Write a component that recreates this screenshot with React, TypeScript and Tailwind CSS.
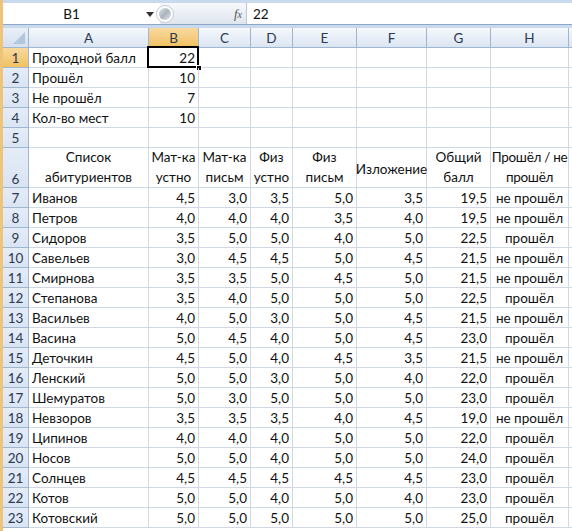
import React from "react";

const cols = ["A", "B", "C", "D", "E", "F", "G", "H"];
const widths = [120, 50, 52, 42, 64, 70, 64, 78];

const data: [string, string, string, string, string, string, string, string][] = [
  ["Иванов", "4,5", "3,0", "3,5", "5,0", "3,5", "19,5", "не прошёл"],
  ["Петров", "4,0", "4,0", "4,0", "3,5", "4,0", "19,5", "не прошёл"],
  ["Сидоров", "3,5", "5,0", "5,0", "4,0", "5,0", "22,5", "прошёл"],
  ["Савельев", "3,0", "4,5", "4,5", "5,0", "4,5", "21,5", "не прошёл"],
  ["Смирнова", "3,5", "3,5", "5,0", "4,5", "5,0", "21,5", "не прошёл"],
  ["Степанова", "3,5", "4,0", "5,0", "5,0", "5,0", "22,5", "прошёл"],
  ["Васильев", "4,0", "5,0", "3,0", "5,0", "4,5", "21,5", "не прошёл"],
  ["Васина", "5,0", "4,5", "4,0", "5,0", "4,5", "23,0", "прошёл"],
  ["Деточкин", "4,5", "5,0", "4,0", "4,5", "3,5", "21,5", "не прошёл"],
  ["Ленский", "5,0", "5,0", "3,0", "5,0", "4,0", "22,0", "прошёл"],
  ["Шемуратов", "5,0", "3,0", "5,0", "5,0", "5,0", "23,0", "прошёл"],
  ["Невзоров", "3,5", "3,5", "3,5", "4,0", "4,5", "19,0", "не прошёл"],
  ["Ципинов", "4,0", "4,0", "4,0", "5,0", "5,0", "22,0", "прошёл"],
  ["Носов", "5,0", "5,0", "4,0", "5,0", "5,0", "24,0", "прошёл"],
  ["Солнцев", "4,5", "4,5", "4,5", "4,5", "4,5", "23,0", "прошёл"],
  ["Котов", "5,0", "5,0", "4,0", "5,0", "4,0", "23,0", "прошёл"],
  ["Котовский", "5,0", "5,0", "5,0", "5,0", "5,0", "25,0", "прошёл"],
];

const top: [string, string][] = [
  ["Проходной балл", "22"],
  ["Прошёл", "10"],
  ["Не прошёл", "7"],
  ["Кол-во мест", "10"],
  ["", ""],
];

const headers: [string, string][] = [
  ["Список", "абитуриентов"],
  ["Мат-ка", "устно"],
  ["Мат-ка", "письм"],
  ["Физ", "устно"],
  ["Физ", "письм"],
  ["", "Изложение"],
  ["Общий", "балл"],
  ["Прошёл / не", "прошёл"],
];

function RowHead({ n, sel, tall }: { n: number; sel?: boolean; tall?: boolean }) {
  return (
    <div
      className={`w-[26px] shrink-0 border-r border-b border-[#9eb6ce] flex justify-center text-[#2b3a52] ${
        tall ? "items-end pb-[1px]" : "items-center pt-[3px]"
      } ${sel ? "bg-gradient-to-b from-[#f9d99f] to-[#f1c15f]" : "bg-gradient-to-b from-[#e4ecf7] to-[#dae4f2]"}`}
    >
      {n}
    </div>
  );
}

function Cell({
  w,
  children,
  align = "left",
}: {
  w: number;
  children?: React.ReactNode;
  align?: "left" | "right" | "center";
}) {
  return (
    <div
      style={{ width: w }}
      className={`shrink-0 border-r border-b border-[#d0d7e5] px-[3px] pt-[3px] flex items-center whitespace-nowrap overflow-hidden ${
        align === "right" ? "justify-end" : align === "center" ? "justify-center" : "justify-start"
      }`}
    >
      {children}
    </div>
  );
}

export default function App() {
  return (
    <div
      className="w-[572px] h-[531px] overflow-hidden flex bg-white text-[13.5px] text-[#111] leading-none"
      style={{ fontFamily: "Lato, 'Open Sans', sans-serif" }}
    >
      <div className="w-[3px] shrink-0 bg-[#eec37a]" />
      <div className="flex-1 flex flex-col min-w-0">
        {/* formula bar */}
        <div className="h-[28px] shrink-0 bg-[#c9daef] pt-[3px] flex flex-col">
          <div className="h-[22px] flex bg-white border-b border-[#8ea7c4]">
            <div className="w-[157px] shrink-0 flex items-center relative pt-[2px]">
              <span className="flex-1 text-center pr-[20px]">B1</span>
              <svg className="absolute right-[6px] top-[9px]" width="8" height="5" viewBox="0 0 8 5">
                <path d="M0 0 L8 0 L4 5 Z" fill="#333" />
              </svg>
            </div>
            <div className="w-[87px] shrink-0 relative bg-gradient-to-b from-[#f6f8fb] to-[#dfe6ef] flex items-center justify-end pr-[4px] border-r border-[#b9c7d8]">
              <div className="absolute left-[-4px] top-[2px] w-[18px] h-[18px] rounded-full bg-white border border-[#c2ccd8] flex items-center justify-center">
                <div className="w-[12px] h-[12px] rounded-full bg-gradient-to-br from-[#dfe4ea] via-[#aab3bd] to-[#e9edf1]" />
              </div>
              <span className="italic text-[#555] text-[13px]" style={{ fontFamily: "'Liberation Serif', serif" }}>
                f<span className="text-[10px]">x</span>
              </span>
            </div>
            <div className="flex-1 flex items-center pl-[6px] pt-[2px]">22</div>
          </div>
        </div>
        {/* column header */}
        <div className="h-[20px] shrink-0 flex">
          <div className="w-[26px] shrink-0 border-r border-b border-[#9eb6ce] bg-gradient-to-b from-[#e9eff8] to-[#d5e0ef] relative">
            <svg className="absolute right-[3px] bottom-[3px]" width="12" height="12" viewBox="0 0 12 12">
              <path d="M12 0 L12 12 L0 12 Z" fill="#b4c6de" />
            </svg>
          </div>
          {cols.map((c, i) => (
            <div
              key={c}
              style={{ width: widths[i] }}
              className={`shrink-0 border-r border-b border-[#9eb6ce] flex items-center justify-center pt-[2px] text-[#2b3a52] ${
                c === "B"
                  ? "bg-gradient-to-b from-[#f9d99f] to-[#f1c15f]"
                  : "bg-gradient-to-b from-[#f5f8fc] to-[#dbe5f2]"
              }`}
            >
              {c}
            </div>
          ))}
          <div className="flex-1 border-b border-[#9eb6ce] bg-gradient-to-b from-[#f5f8fc] to-[#dbe5f2]" />
        </div>
        {/* rows 1-5 */}
        {top.map(([a, b], r) => (
          <div key={r} className="h-[20px] shrink-0 flex">
            <RowHead n={r + 1} sel={r === 0} />
            <Cell w={widths[0]}>{a}</Cell>
            <div
              style={{ width: widths[1] }}
              className="shrink-0 border-r border-b border-[#d0d7e5] flex items-center justify-end px-[3px] pt-[3px] relative"
            >
              {b}
              {r === 0 && (
                <>
                  <div className="absolute left-[-2px] top-[-2px] right-[-1px] bottom-[-1px] border-2 border-black" />
                  <div className="absolute right-[-4px] bottom-[-4px] w-[6px] h-[6px] bg-black border border-white" />
                </>
              )}
            </div>
            {widths.slice(2).map((w, i) => (
              <Cell key={i} w={w} />
            ))}
            <div className="flex-1 border-b border-[#d0d7e5]" />
          </div>
        ))}
        {/* row 6 headers */}
        <div className="h-[40px] shrink-0 flex">
          <RowHead n={6} tall />
          {headers.map(([l1, l2], i) => (
            <div
              key={i}
              style={{ width: widths[i] }}
              className={`shrink-0 border-r border-b border-[#d0d7e5] flex flex-col items-center text-center whitespace-nowrap leading-[20px] ${
                l1 ? "justify-end" : "justify-center pt-[2px]"
              } ${i === 7 ? "tracking-[-0.3px]" : ""}`}
            >
              {l1 && <span>{l1}</span>}
              <span>{l2}</span>
            </div>
          ))}
          <div className="flex-1 border-b border-[#d0d7e5]" />
        </div>
        {/* data */}
        {data.map((row, r) => (
          <div key={r} className="h-[20px] shrink-0 flex">
            <RowHead n={r + 7} />
            {row.map((v, i) => (
              <Cell key={i} w={widths[i]} align={i === 0 ? "left" : i === 7 ? "center" : "right"}>
                {v}
              </Cell>
            ))}
            <div className="flex-1 border-b border-[#d0d7e5]" />
          </div>
        ))}
      </div>
    </div>
  );
}
